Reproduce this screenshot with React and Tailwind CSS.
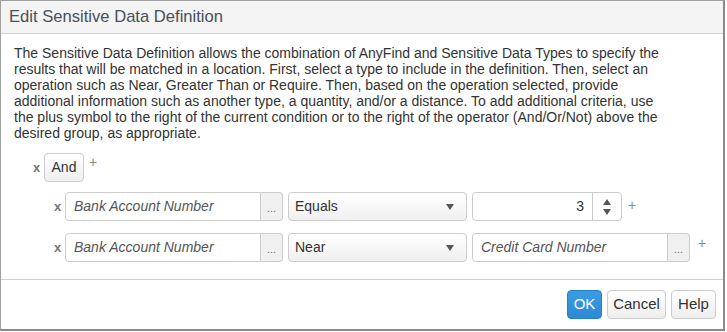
export default function App() {
  const font = { fontFamily: '"Liberation Sans", Arial, sans-serif' };
  return (
    <div className="w-[727px] h-[332px] bg-white overflow-hidden" style={font}>
      <div className="w-[725px] h-[331px] flex flex-col border border-[#a0a0a0] border-r-2 border-b-2 border-r-[#8a8a8a] border-b-[#8a8a8a] bg-white">
        <div className="h-[33px] shrink-0 flex items-center px-[8px] bg-[#f4f4f4] border-b border-[#cfcfcf]">
          <span className="text-[16.6px] text-[#4a4f59]">Edit Sensitive Data Definition</span>
        </div>
        <div className="flex-1 px-[13px] pt-[11px]">
          <p className="text-[14px] leading-[16px] text-[#333] whitespace-nowrap">
            The Sensitive Data Definition allows the combination of AnyFind and Sensitive Data Types to specify the<br />
            results that will be matched in a location. First, select a type to include in the definition. Then, select an<br />
            operation such as Near, Greater Than or Require. Then, based on the operation selected, provide<br />
            additional information such as another type, a quantity, and/or a distance. To add additional criteria, use<br />
            the plus symbol to the right of the current condition or to the right of the operator (And/Or/Not) above the<br />
            desired group, as appropriate.
          </p>
          <div className="mt-[12px] ml-[19px] flex items-center h-[29px]">
            <span className="text-[13px] font-bold text-[#777] w-[11px]">x</span>
            <button className="h-[29px] w-[40px] rounded-[4px] border border-[#ccc] bg-gradient-to-b from-white to-[#f0f0f0] text-[14px] text-[#333]">And</button>
            <span className="ml-[5px] -mt-[10px] text-[14px] text-[#888]">+</span>
          </div>
          <div className="mt-[10px] ml-[40px] flex flex-col gap-[12px]">
            <div className="flex items-center h-[29px]">
              <span className="text-[13px] font-bold text-[#777] w-[11px]">x</span>
              <TypeInput value="Bank Account Number" />
              <Select value="Equals" />
              <div className="ml-[5px] w-[150px] h-[29px] flex rounded-[4px] border border-[#ccc] bg-white">
                <div className="flex-1 flex items-center justify-end pr-[8px] text-[14px] text-[#333]">3</div>
                <div className="w-[29px] border-l border-[#ccc] flex flex-col items-center justify-center gap-[4px]">
                  <span className="w-0 h-0 border-l-[4px] border-r-[4px] border-b-[6px] border-l-transparent border-r-transparent border-b-[#555]" />
                  <span className="w-0 h-0 border-l-[4px] border-r-[4px] border-t-[6px] border-l-transparent border-r-transparent border-t-[#555]" />
                </div>
              </div>
              <span className="ml-[6px] -mt-[3px] text-[14px] text-[#888]">+</span>
            </div>
            <div className="flex items-center h-[29px]">
              <span className="text-[13px] font-bold text-[#777] w-[11px]">x</span>
              <TypeInput value="Bank Account Number" />
              <Select value="Near" />
              <div className="ml-[5px] flex">
                <TypeInput value="Credit Card Number" />
              </div>
              <span className="ml-[8px] -mt-[8px] text-[14px] text-[#888]">+</span>
            </div>
          </div>
        </div>
        <div className="h-[50px] shrink-0 border-t border-[#cfcfcf] flex items-start justify-end gap-[5px] pr-[7px] pt-[10px]">
          <button className="h-[29px] w-[35px] rounded-[4px] border border-[#2a7fc9] bg-gradient-to-b from-[#3a9be3] to-[#2d8ad6] text-[15px] text-white">OK</button>
          <button className="h-[29px] w-[59px] rounded-[4px] border border-[#ccc] bg-gradient-to-b from-white to-[#eeeeee] text-[15px] text-[#333]">Cancel</button>
          <button className="h-[29px] w-[45px] rounded-[4px] border border-[#ccc] bg-gradient-to-b from-white to-[#eeeeee] text-[15px] text-[#333]">Help</button>
        </div>
      </div>
    </div>
  );
}

function TypeInput({ value }) {
  return (
    <div className="flex h-[29px]">
      <div className="w-[196px] h-[29px] flex items-center pl-[8px] rounded-l-[4px] border border-[#ccc] bg-white text-[14px] italic text-[#555]">
        {value}
      </div>
      <div className="w-[22px] h-[29px] flex items-end justify-center pb-[6px] rounded-r-[4px] border border-l-0 border-[#ccc] bg-[#f0f0f0] text-[11px] leading-[11px] text-[#777]">
        ...
      </div>
    </div>
  );
}

function Select({ value }) {
  return (
    <div className="ml-[5px] w-[179px] h-[29px] flex items-center justify-between px-[6px] rounded-[4px] border border-[#ccc] bg-gradient-to-b from-white to-[#f0f0f0] text-[14px] text-[#333]">
      <span>{value}</span>
      <span className="mr-[6px] w-0 h-0 border-l-[4px] border-r-[4px] border-t-[6px] border-l-transparent border-r-transparent border-t-[#555]" />
    </div>
  );
}
